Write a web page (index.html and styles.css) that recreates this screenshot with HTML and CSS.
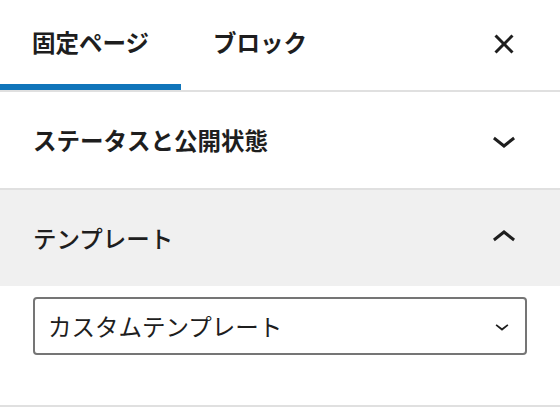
FILE: index.html
```html
<!DOCTYPE html>
<html>

<head>
    <link rel="stylesheet" href="styles.css">
    <title>固定ページ設定</title>
</head>

<body>
    <div class="sidebar">
        <div class="tabs">
            <div class="tab active">固定ページ</div>
            <div class="tab">ブロック</div>
            <div class="close">
                <svg viewBox="0 0 24 24" width="48" height="48">
                    <path d="M12 13.06l3.712 3.713 1.061-1.06L13.061 12l3.712-3.712-1.06-1.06L12 10.938 8.288 7.227l-1.061 1.06L10.939 12l-3.712 3.712 1.06 1.061L12 13.061z"/>
                </svg>
            </div>
        </div>

        <div class="panel">
            <div class="panel-head">
                <span class="title strong">ステータスと公開状態</span>
                <svg viewBox="0 0 24 24" width="48" height="48">
                    <path d="M17.5 11.6L12 16l-5.5-4.4.9-1.2L12 14l4.6-3.6.9 1.2z"/>
                </svg>
            </div>
        </div>

        <div class="panel open">
            <div class="panel-head">
                <span class="title">テンプレート</span>
                <svg viewBox="0 0 24 24" width="48" height="48">
                    <path d="M6.5 12.4L12 8l5.5 4.4-.9 1.2L12 10l-4.6 3.6-.9-1.2z"/>
                </svg>
            </div>
            <div class="panel-body">
                <div class="select">
                    <span>カスタムテンプレート</span>
                    <svg viewBox="0 0 24 24" width="28" height="28">
                        <path d="M17.5 11.6L12 16l-5.5-4.4.9-1.2L12 14l4.6-3.6.9 1.2z"/>
                    </svg>
                </div>
            </div>
        </div>
    </div>
</body>

</html>
```

FILE: styles.css
```css
body {
    margin: 0;
    background: #fff;
    color: #1e1e1e;
    font-family: "Noto Sans CJK JP", "Noto Sans", sans-serif;
    font-size: 23.5px;
}

svg {
    display: block;
    fill: #1e1e1e;
}

.tabs {
    display: flex;
    height: 90px;
    border-bottom: 2px solid #e0e0e0;
}

.tab {
    display: flex;
    align-items: center;
    padding: 0 32px 6px 32px;
    font-weight: 600;
}

.tab.active {
    box-shadow: inset 0 -6px 0 #1075ba;
}

.close {
    align-self: center;
    margin: 0 32px 3px auto;
}

.panel {
    border-bottom: 2px solid #e0e0e0;
}

.panel-head {
    display: flex;
    align-items: center;
    justify-content: space-between;
    height: 96px;
    padding: 0 32px 0 33px;
}

.title {
    font-weight: 500;
}

.title.strong {
    font-weight: 600;
}

.open .panel-head {
    background: #f0f0f0;
}

.panel-body {
    padding: 11px 33px 50px 33px;
}

.select {
    display: flex;
    align-items: center;
    justify-content: space-between;
    box-sizing: border-box;
    height: 58px;
    padding: 0 9px 0 13px;
    border: 2px solid #757575;
    border-radius: 4px;
}
```
